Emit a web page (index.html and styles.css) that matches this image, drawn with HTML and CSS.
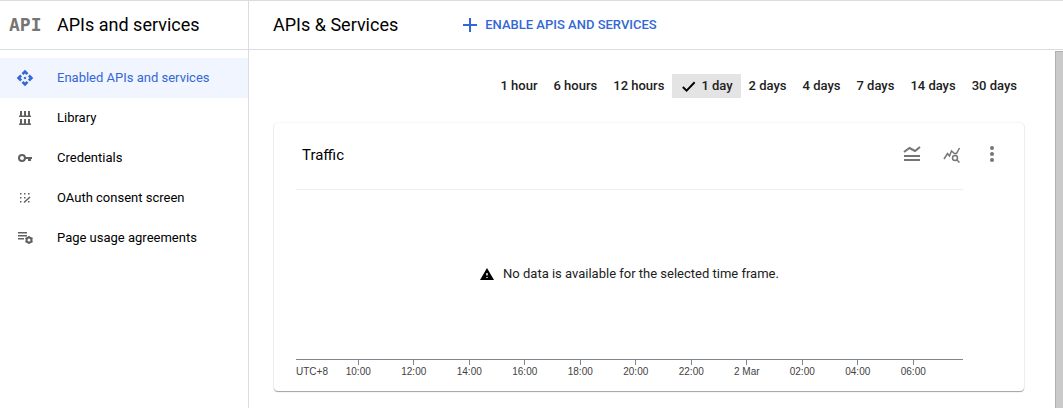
FILE: index.html
```html
<!DOCTYPE html>
<html lang="en">
<head>
<meta charset="utf-8">
<title>APIs and services</title>
<link rel="stylesheet" href="styles.css">
</head>
<body>
<div class="app">
  <aside class="sidebar">
    <div class="product">
      <span class="logo">API</span>
      <span class="heading">APIs and services</span>
    </div>
    <nav class="nav">
      <a class="nav-item active" href="#">
        <svg class="icon" viewBox="0 0 24 24"><path d="M14 12l-2 2-2-2 2-2zM12 6l2.100 2.100 2.500-2.500L12 1 7.400 5.600l2.500 2.500zM6 12l2.100-2.100-2.500-2.500L1 12l4.600 4.600 2.500-2.500zM18 12l-2.100 2.100 2.500 2.500L23 12l-4.600-4.600-2.500 2.500zM12 18l-2.100-2.100-2.500 2.500L12 23l4.600-4.600-2.500-2.500z"/></svg>
        Enabled APIs and services
      </a>
      <a class="nav-item" href="#">
        <svg class="icon" viewBox="0 0 18 18"><path d="M3 6.500h12V8H3zM4 2h2v5H4zM8 2h2v5H8zM12 2h2v5h-2zM3 14.500h12V16H3zM4 10h2v5H4zM8 10h2v5H8zM12 10h2v5h-2z"/></svg>
        Library
      </a>
      <a class="nav-item" href="#">
        <svg class="icon" viewBox="0 0 18 18"><circle class="ring" cx="6" cy="9" r="3"/><path d="M9 8h7v2h-1v2h-3v-2H9z"/></svg>
        Credentials
      </a>
      <a class="nav-item" href="#">
        <svg class="icon" viewBox="0 0 18 18"><path d="M4 4h1.500v1.500H4zM8 4h1.500v1.500H8zM12 4h1.500v1.500H12zM4 8h1.500v1.500H4zM8 8h1.500v1.500H8zM4 12h1.500v1.500H4z"/><path class="stroke" d="M8 13.500L14 8"/><path d="M12 12h1.500v1.500H12z"/></svg>
        OAuth consent screen
      </a>
      <a class="nav-item" href="#">
        <svg class="icon" viewBox="0 0 18 18"><path d="M2 3h9v1.500H2zM2 6h9v1.500H2zM2 9h6v1.500H2z"/><circle class="ring" cx="13" cy="11" r="2.500"/><path class="stroke" d="M13 7v2M13 13v2M9.500 9l1.700 1M14.800 12l1.700 1M9.500 13l1.700-1M14.800 10l1.700-1"/></svg>
        Page usage agreements
      </a>
    </nav>
  </aside>
  <div class="content">
    <header class="topbar">
      <h1 class="heading">APIs &amp; Services</h1>
      <button class="enable" type="button">
        <svg class="plus" viewBox="0 0 14 14"><path d="M6 0h2v6h6v2H8v6H6V8H0V6h6z"/></svg>
        ENABLE APIS AND SERVICES
      </button>
    </header>
    <div class="scroll">
      <main class="main">
        <div class="ranges">
          <button type="button" class="range">1 hour</button>
          <button type="button" class="range">6 hours</button>
          <button type="button" class="range">12 hours</button>
          <button type="button" class="range selected" aria-pressed="true"><svg class="check" viewBox="0 0 18 18"><path d="M3 9.500l4 4 8.500-9"/></svg>1 day</button>
          <button type="button" class="range">2 days</button>
          <button type="button" class="range">4 days</button>
          <button type="button" class="range">7 days</button>
          <button type="button" class="range">14 days</button>
          <button type="button" class="range">30 days</button>
        </div>
        <section class="card">
          <div class="card-head">
            <h2 class="card-title">Traffic</h2>
            <div class="tools">
              <button type="button" class="tool" aria-label="Toggle legend"><svg class="tool-icon" viewBox="0 0 18 18"><path d="M1 10h16v2H1zM1 14h16v2H1z"/><path class="line" d="M1 7l5.500-4L12 6l5-4"/></svg></button>
              <button type="button" class="tool" aria-label="Explore data"><svg class="tool-icon" viewBox="0 0 18 18"><path class="thin" d="M1 14l3.500-5.500L6.500 11l2-5 3 2.500h2L16.500 3"/><circle class="thin" cx="12" cy="13" r="2.500"/><path class="thin" d="M14 15l2.500 2.500"/></svg></button>
              <button type="button" class="tool" aria-label="More options"><svg class="tool-icon" viewBox="0 0 18 18"><circle cx="9" cy="3" r="2"/><circle cx="9" cy="9" r="2"/><circle cx="9" cy="15" r="2"/></svg></button>
            </div>
          </div>
          <div class="empty">
            <svg class="warn" viewBox="0 0 14 12"><path d="M7 0l7 12H0zM6.300 5v2.500h1.400V5zM6.300 9v1h1.400V9z" fill-rule="evenodd"/></svg>
            No data is available for the selected time frame.
          </div>
          <div class="axis">
            <span class="zone">UTC+8</span>
            <span class="tick">10:00</span>
            <span class="tick">12:00</span>
            <span class="tick">14:00</span>
            <span class="tick">16:00</span>
            <span class="tick">18:00</span>
            <span class="tick">20:00</span>
            <span class="tick">22:00</span>
            <span class="tick">2 Mar</span>
            <span class="tick">02:00</span>
            <span class="tick">04:00</span>
            <span class="tick">06:00</span>
            <span class="tail"></span>
          </div>
        </section>
      </main>
      <div class="scrollbar"></div>
    </div>
  </div>
</div>
</body>
</html>
```
FILE: styles.css
```css
* {
  box-sizing: border-box;
}

body {
  margin: 0;
  background: #fff;
  color: #000;
  font: 13px/20px Roboto, "Liberation Sans", sans-serif;
}

button {
  border: 0;
  background: none;
  font: inherit;
  color: inherit;
  cursor: pointer;
}

.app {
  display: flex;
  min-height: 100vh;
  border-top: 1px solid #dadce0;
}

.sidebar {
  flex: 0 0 249px;
  border-right: 1px solid #dadce0;
}

.product {
  display: flex;
  align-items: center;
  height: 49px;
  padding-left: 9px;
  border-bottom: 1px solid #dadce0;
}

.logo {
  width: 48px;
  color: #757575;
  font: bold 18px/24px "DejaVu Sans Mono", monospace;
}

.heading {
  margin: 0;
  font-size: 18px;
  font-weight: 400;
  line-height: 24px;
}

.nav {
  padding-top: 8px;
}

.nav-item {
  display: flex;
  align-items: center;
  gap: 23px;
  height: 40px;
  padding-left: 16px;
  color: #000;
  text-decoration: none;
}

.nav-item.active {
  background: #f0f5ff;
  color: #3367d6;
}

.icon {
  width: 18px;
  height: 18px;
  fill: #616161;
}

.active .icon {
  fill: #3367d6;
}

.stroke,
.ring {
  fill: none;
  stroke: #616161;
  stroke-width: 1.5;
}

.ring {
  stroke-width: 2;
}

.content {
  display: flex;
  flex: 1;
  flex-direction: column;
  min-width: 0;
}

.topbar {
  display: flex;
  align-items: center;
  gap: 65px;
  height: 49px;
  padding-left: 24px;
  border-bottom: 1px solid #dadce0;
}

.enable {
  display: flex;
  align-items: center;
  gap: 8px;
  padding: 0;
  color: #3367d6;
  font-weight: 500;
}

.plus {
  width: 14px;
  height: 14px;
  fill: #3367d6;
}

.scroll {
  display: flex;
  flex: 1;
}

.main {
  flex: 1;
  min-width: 0;
  padding: 24px 30px 16px 25px;
}

.scrollbar {
  width: 8px;
  margin-top: 1px;
  border: solid #b0b0b0;
  border-width: 1px 0 0 1px;
  background: #cacaca;
}

.ranges {
  display: flex;
  justify-content: flex-end;
  margin-bottom: 25px;
}

.range {
  display: flex;
  align-items: center;
  gap: 4px;
  height: 24px;
  padding: 0 8px;
  color: #212121;
  font-weight: 500;
  white-space: nowrap;
}

.range.selected {
  background: #e4e4e4;
}

.check {
  width: 17px;
  height: 17px;
  fill: none;
  stroke: #000;
  stroke-width: 2;
}

.card {
  margin-right: 1px;
  padding: 0 61px 13px 22px;
  border-radius: 4px;
  box-shadow: 0 1px 1px rgba(0, 0, 0, 0.35), 0 0 2px rgba(0, 0, 0, 0.12);
}

.card-head {
  display: flex;
  align-items: center;
  justify-content: space-between;
  height: 67px;
  padding: 0 0 4px 6px;
  margin-bottom: 18px;
  border-bottom: 1px solid #eee;
}

.card-title {
  margin: 0;
  padding-top: 2px;
  font-size: 15px;
  font-weight: 400;
}

.tools {
  display: flex;
  margin-right: -49px;
}

.tool {
  display: flex;
  align-items: center;
  justify-content: center;
  width: 40px;
  height: 40px;
  padding: 0;
}

.tool-icon {
  width: 18px;
  height: 18px;
  fill: #757575;
}

.tool-icon .line,
.tool-icon .thin {
  fill: none;
  stroke: #757575;
  stroke-width: 2;
}

.tool-icon .thin {
  stroke-width: 1.5;
}

.empty {
  display: flex;
  align-items: center;
  justify-content: center;
  gap: 9px;
  height: 132px;
  margin-bottom: 19px;
  color: #212121;
}

.warn {
  width: 14px;
  height: 12px;
  fill: #000;
}

.axis {
  display: flex;
  border-top: 1px solid #80868b;
  color: #424242;
  font: 10px/12px "Liberation Sans", Arial, sans-serif;
}

.zone {
  flex: 69 0 0;
  min-width: 0;
  padding-top: 6px;
  white-space: nowrap;
}

.tick {
  display: flex;
  flex: 111 0 0;
  flex-direction: column;
  align-items: center;
  min-width: 0;
  white-space: nowrap;
}

.tick::before {
  width: 1px;
  height: 5px;
  margin-bottom: 1px;
  background: #80868b;
  content: "";
}

.tail {
  flex: 44 0 0;
}
```
